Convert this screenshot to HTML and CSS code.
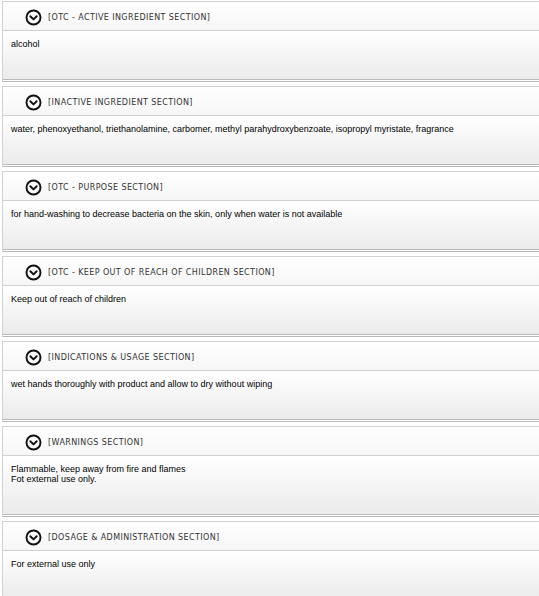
FILE: index.html
```html
<!DOCTYPE html>
<html>
<head>
<meta charset="utf-8">
<link rel="stylesheet" href="styles.css">
</head>
<body>
<div class="list">
  <div class="section">
    <div class="hdr"><svg class="ico" viewBox="0 0 16 16"><circle cx="8" cy="8" r="6.6"/><path d="M5 6.8 L8 9.8 L11 6.8"/></svg><span class="title">[OTC - ACTIVE INGREDIENT SECTION]</span></div>
    <div class="body">alcohol</div>
  </div>
  <div class="section">
    <div class="hdr"><svg class="ico" viewBox="0 0 16 16"><circle cx="8" cy="8" r="6.6"/><path d="M5 6.8 L8 9.8 L11 6.8"/></svg><span class="title">[INACTIVE INGREDIENT SECTION]</span></div>
    <div class="body">water, phenoxyethanol, triethanolamine, carbomer, methyl parahydroxybenzoate, isopropyl myristate, fragrance</div>
  </div>
  <div class="section">
    <div class="hdr"><svg class="ico" viewBox="0 0 16 16"><circle cx="8" cy="8" r="6.6"/><path d="M5 6.8 L8 9.8 L11 6.8"/></svg><span class="title">[OTC - PURPOSE SECTION]</span></div>
    <div class="body">for hand-washing to decrease bacteria on the skin, only when water is not available</div>
  </div>
  <div class="section">
    <div class="hdr"><svg class="ico" viewBox="0 0 16 16"><circle cx="8" cy="8" r="6.6"/><path d="M5 6.8 L8 9.8 L11 6.8"/></svg><span class="title">[OTC - KEEP OUT OF REACH OF CHILDREN SECTION]</span></div>
    <div class="body">Keep out of reach of children</div>
  </div>
  <div class="section">
    <div class="hdr"><svg class="ico" viewBox="0 0 16 16"><circle cx="8" cy="8" r="6.6"/><path d="M5 6.8 L8 9.8 L11 6.8"/></svg><span class="title">[INDICATIONS &amp; USAGE SECTION]</span></div>
    <div class="body">wet hands thoroughly with product and allow to dry without wiping</div>
  </div>
  <div class="section">
    <div class="hdr"><svg class="ico" viewBox="0 0 16 16"><circle cx="8" cy="8" r="6.6"/><path d="M5 6.8 L8 9.8 L11 6.8"/></svg><span class="title">[WARNINGS SECTION]</span></div>
    <div class="body">Flammable, keep away from fire and flames<br>Fot external use only.</div>
  </div>
  <div class="section">
    <div class="hdr"><svg class="ico" viewBox="0 0 16 16"><circle cx="8" cy="8" r="6.6"/><path d="M5 6.8 L8 9.8 L11 6.8"/></svg><span class="title">[DOSAGE &amp; ADMINISTRATION SECTION]</span></div>
    <div class="body">For external use only</div>
  </div>
</div>
</body>
</html>
```
FILE: styles.css
```css
html, body {
  margin: 0;
  padding: 0;
  background: #ffffff;
  overflow: hidden;
}
.list {
  padding-top: 1px;
  display: flex;
  flex-direction: column;
  gap: 4px;
}
.section {
  margin-left: 2px;
  margin-right: -20px;
  border: 1px solid #d2d2d2;
  border-bottom: none;
}
.hdr {
  height: 29px;
  box-sizing: border-box;
  padding-top: 2px;
  display: flex;
  align-items: center;
  padding-left: 22px;
  gap: 6px;
  background: linear-gradient(#ffffff, #f6f6f6);
  border-bottom: 1px solid #d0d0d0;
}
.ico {
  width: 17px;
  height: 17px;
  fill: none;
  stroke: #111;
  stroke-width: 1.8;
  stroke-linecap: round;
  stroke-linejoin: round;
}
.title {
  font-family: "DejaVu Sans", Verdana, sans-serif;
  font-size: 8px;
  letter-spacing: 0.4px;
  color: #333;
}
.body {
  padding: 8px 8px 30px 8px;
  font-family: "Liberation Sans", Arial, sans-serif;
  font-size: 9px;
  line-height: 10px;
  color: #000;
  background: linear-gradient(#ffffff, #ebebeb);
  border-bottom: 3px double #b9b9b9;
}
```
